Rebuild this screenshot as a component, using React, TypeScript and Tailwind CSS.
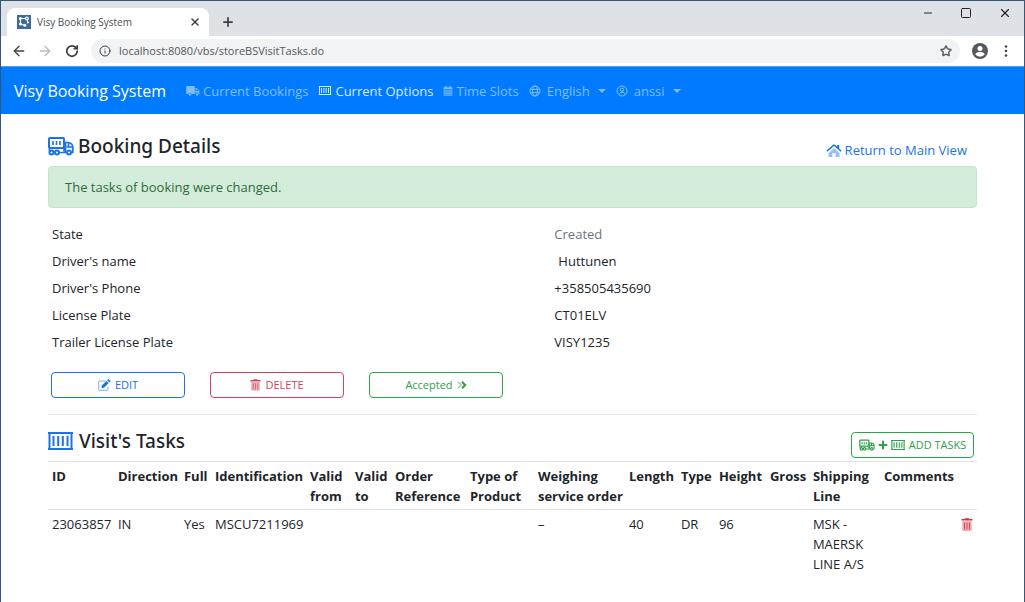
import { useState } from "react";
import { ArrowLeft, ArrowRight, Info, Minus, Plus, RotateCw, Square, Star, X } from "lucide-react";

type IconProps = { className?: string };

function TruckIcon({ className }: IconProps) {
  return (
    <svg viewBox="0 0 26 20" className={className} fill="none" stroke="currentColor" strokeWidth="2" aria-hidden="true">
      <rect x="1" y="2" width="15" height="10" rx="1" />
      <path d="M5 5v4M8.500 5v4M12 5v4" strokeWidth="1.600" />
      <path d="M1.500 12v3.500M16 12v3.500M10 16.500h8M17.500 16.500V6.500H20c2.500 0 4.800 2 4.800 4.500v5.500h-1M18.500 11h6M20.500 7v4" strokeWidth="1.700" />
      <circle cx="3.500" cy="16.500" r="2" />
      <circle cx="9" cy="16.500" r="2" />
      <circle cx="21" cy="16.500" r="2" />
    </svg>
  );
}

function SolidTruckIcon({ className }: IconProps) {
  return (
    <svg viewBox="0 0 14 11" className={className} fill="currentColor" aria-hidden="true">
      <path d="M1 1h7a.8.8 0 0 1 .8.8V9H5.600a1.700 1.700 0 0 0-3.200 0H1a.8.8 0 0 1-.8-.8V1.800A.8.8 0 0 1 1 1Z" />
      <path d="M9.400 3h1.500l2.600 2.700V9h-.7a1.700 1.700 0 0 0-3.200 0h-.2Zm1 1v1.900h2.100L10.700 4Z" opacity=".85" />
      <circle cx="4" cy="9.500" r="1.200" />
      <circle cx="11.200" cy="9.500" r="1.200" />
    </svg>
  );
}

function ContainerIcon({ className }: IconProps) {
  return (
    <svg viewBox="0 0 25 18" className={className} fill="none" stroke="currentColor" strokeWidth="2" aria-hidden="true">
      <path d="M0 1h25M0 17h25M1.500 1v16M23.500 1v16" />
      <path d="M5.500 4v10M10.200 4v10M14.800 4v10M19.500 4v10" />
    </svg>
  );
}

function CalendarIcon({ className }: IconProps) {
  return (
    <svg viewBox="0 0 10 11" className={className} fill="currentColor" aria-hidden="true">
      <path d="M2 0h1.500v1.300h3V0H8v1.300h1.200a.8.8 0 0 1 .8.8v1.400H0V2.100a.8.8 0 0 1 .8-.8H2Z" />
      <path d="M0 4.200h10v6a.8.8 0 0 1-.8.8H.8a.8.8 0 0 1-.8-.8Z" opacity=".6" />
    </svg>
  );
}

function GlobeIcon({ className }: IconProps) {
  return (
    <svg viewBox="0 0 12 12" className={className} fill="none" stroke="currentColor" aria-hidden="true">
      <circle cx="6" cy="6" r="5" />
      <ellipse cx="6" cy="6" rx="2.400" ry="5" />
      <path d="M1.400 4.300h9.200M1.400 7.700h9.200" />
    </svg>
  );
}

function UserIcon({ className }: IconProps) {
  return (
    <svg viewBox="0 0 12 12" className={className} fill="none" stroke="currentColor" aria-hidden="true">
      <circle cx="6" cy="6" r="5" />
      <circle cx="6" cy="4.800" r="1.700" />
      <path d="M3 9.500c.3-1.500 1.200-2 3-2s2.700.5 3 2" />
    </svg>
  );
}

function HomeIcon({ className }: IconProps) {
  return (
    <svg viewBox="0 0 16 13" className={className} fill="currentColor" aria-hidden="true">
      <path d="M8 4.200 13.500 9v3.400a.5.500 0 0 1-.5.500H9.700V9.300H6.300v3.600H3a.5.500 0 0 1-.5-.5V9Z" opacity=".45" />
      <path d="M7.200.7a1.200 1.200 0 0 1 1.600 0l2.400 2V1h2v3.500l2.400 2.100-.9 1.100L8 2 1.300 7.700.4 6.600Z" />
    </svg>
  );
}

function EditIcon({ className }: IconProps) {
  return (
    <svg viewBox="0 0 13 12" className={className} fill="currentColor" aria-hidden="true">
      <path d="M8 2H1.500a.8.8 0 0 0-.8.8v7.700c0 .4.400.8.800.8h7.700c.4 0 .8-.4.800-.8V7.500" fill="none" stroke="currentColor" opacity=".55" />
      <path d="M3.800 6.600 8.500 1.900l2.200 2.200L6 8.800l-2.500.4ZM9.200 1.200l.8-.8c.3-.3.700-.3 1 0l1.300 1.300c.3.300.3.700 0 1l-.8.8Z" />
    </svg>
  );
}

function TrashIcon({ className }: IconProps) {
  return (
    <svg viewBox="0 0 12 13" className={className} fill="currentColor" aria-hidden="true">
      <path d="M.5 1h3.200l.5-.8h3.600l.5.800h3.200v1.600H.5Z" />
      <path d="M1.300 3.200h9.400v8.600c0 .6-.5 1.100-1.100 1.100H2.400c-.6 0-1.100-.5-1.100-1.100Z" opacity=".4" />
      <path d="M3.500 4.500v7M6 4.500v7M8.500 4.500v7" stroke="currentColor" opacity=".75" />
    </svg>
  );
}

function ChevronsIcon({ className }: IconProps) {
  return (
    <svg viewBox="0 0 10 8" className={className} fill="none" stroke="currentColor" aria-hidden="true">
      <path d="m1 .8 3.200 3.200L1 7.200" strokeWidth="1.300" opacity=".5" />
      <path d="m5 .8 3.200 3.200L5 7.200" strokeWidth="2" />
    </svg>
  );
}

function Caret() {
  return <span className="ml-2 border-x-4 border-t-4 border-x-transparent border-t-current" />;
}

function BrowserChrome() {
  const [url, setUrl] = useState("localhost:8080/vbs/storeBSVisitTasks.do");
  return (
    <div>
      <div className="flex h-[35px] bg-[#dee1e6] pt-[7px]">
        <div className="ml-1.5 flex w-[202px] items-center rounded-t-lg bg-white pl-2.5 pr-2">
          <svg viewBox="0 0 14 14" className="h-3.5 w-3.5" aria-hidden="true">
            <rect width="14" height="14" fill="#3d6a9c" />
            <g fill="none" stroke="#fff" strokeWidth="1">
              <path d="M3.300 3.500H10M3.400 3.500V9M10.500 4v4M4 9.500l4 .5" />
            </g>
            <g fill="#fff">
              <circle cx="3.300" cy="3.500" r="1.500" />
              <circle cx="9.800" cy="3.500" r="2" />
              <circle cx="3.500" cy="9" r="1.500" />
              <circle cx="7.800" cy="10.200" r="1.500" />
              <circle cx="11" cy="7.500" r="1" />
            </g>
            <circle cx="9.800" cy="3.500" r=".8" fill="#3d6a9c" />
          </svg>
          <span className="ml-1.5 flex-1 text-[10px] text-[#4a4d51]">Visy Booking System</span>
          <button type="button" aria-label="Close tab" className="text-[#3c4043]"><X className="h-3 w-3" strokeWidth={3} /></button>
        </div>
        <button type="button" aria-label="New tab" className="ml-3 h-7 text-[#3c4043]"><Plus className="h-3.5 w-3.5" strokeWidth={3} /></button>
        <div className="-mt-[7px] ml-auto flex h-6 items-center gap-[26px] pr-3 text-[#222]">
          <button type="button" aria-label="Minimize"><Minus className="h-3 w-3" strokeWidth={2} /></button>
          <button type="button" aria-label="Maximize"><Square className="h-3 w-3" strokeWidth={2} /></button>
          <button type="button" aria-label="Close"><X className="h-3.5 w-3.5" strokeWidth={2} /></button>
        </div>
      </div>
      <div className="flex h-[30px] items-center bg-white pl-2.5 pr-4 text-[#5f6368]">
        <button type="button" aria-label="Back" className="text-[#3c4043]"><ArrowLeft className="h-4 w-4" strokeWidth={2} /></button>
        <button type="button" aria-label="Forward" className="ml-2.5 text-[#b9bbbe]"><ArrowRight className="h-4 w-4" strokeWidth={2} /></button>
        <button type="button" aria-label="Reload" className="ml-3 text-[#3c4043]"><RotateCw className="h-3.5 w-3.5" strokeWidth={3} /></button>
        <div className="ml-3 flex h-6 flex-1 items-center rounded-full bg-[#f1f3f4] pl-2 pr-2">
          <Info className="h-3 w-3 text-[#3c4043]" strokeWidth={2} />
          <input
            aria-label="Address"
            value={url}
            onChange={(e) => setUrl(e.target.value)}
            className="ml-2 min-w-0 flex-1 bg-transparent text-[11px] text-[#55585c] outline-none"
          />
          <button type="button" aria-label="Bookmark"><Star className="h-3 w-3" strokeWidth={3} /></button>
        </div>
        <button type="button" aria-label="Profile" className="ml-3">
          <svg viewBox="0 0 16 16" className="h-4 w-4" aria-hidden="true">
            <circle cx="8" cy="8" r="8" fill="#55585c" />
            <circle cx="8" cy="5.500" r="2.500" fill="#fff" />
            <path d="M3.200 11.300c.6-1.700 3-2.200 4.800-2.200s4.200.5 4.800 2.200A5.900 5.900 0 0 1 8 13.800a5.900 5.900 0 0 1-4.800-2.500Z" fill="#fff" />
          </svg>
        </button>
        <button type="button" aria-label="Menu" className="ml-4">
          <svg viewBox="0 0 4 12" className="h-3 w-1" fill="#44474b" aria-hidden="true">
            <circle cx="2" cy="1.500" r="1.300" />
            <circle cx="2" cy="6" r="1.300" />
            <circle cx="2" cy="10.500" r="1.300" />
          </svg>
        </button>
      </div>
    </div>
  );
}

function Navbar() {
  return (
    <nav className="flex h-12 items-center border-t border-[#4aa0ff] bg-[#007bff] px-[13px] text-[13px] text-[#80bdff]">
      <a href="#home" className="mr-5 text-base text-white">Visy Booking System</a>
      <a href="#bookings" className="mr-2.5 flex items-center gap-[3px]"><SolidTruckIcon className="h-[11px] w-3.5" />Current Bookings</a>
      <a href="#options" className="mr-2.5 flex items-center gap-[3px] text-[#d6eaff]"><ContainerIcon className="h-[9px] w-3.5" />Current Options</a>
      <a href="#slots" className="mr-2.5 flex items-center gap-[3px]"><CalendarIcon className="h-2.5 w-2.5" />Time Slots</a>
      <button type="button" className="mr-2.5 flex items-center"><GlobeIcon className="mr-1.5 h-3 w-3" />English<Caret /></button>
      <button type="button" className="flex items-center"><UserIcon className="mr-1.5 h-3 w-3" />anssi<Caret /></button>
    </nav>
  );
}

const details = [
  { label: "State", value: "Created", valueClass: "text-[#6c757d]" },
  { label: "Driver's name", value: "Huttunen", valueClass: "pl-1" },
  { label: "Driver's Phone", value: "+358505435690", valueClass: "" },
  { label: "License Plate", value: "CT01ELV", valueClass: "" },
  { label: "Trailer License Plate", value: "VISY1235", valueClass: "" },
];

// widths are relative, the table scales them to its own width
const columns = [
  { title: "ID", width: 66, value: "23063857" },
  { title: "Direction", width: 66, value: "IN" },
  { title: "Full", width: 31, value: "Yes" },
  { title: "Identification", width: 95, value: "MSCU7211969" },
  { title: "Valid from", width: 45, value: "" },
  { title: "Valid to", width: 40, value: "" },
  { title: "Order Reference", width: 75, value: "" },
  { title: "Type of Product", width: 68, value: "" },
  { title: "Weighing service order", width: 91, value: "–" },
  { title: "Length", width: 52, value: "40" },
  { title: "Type", width: 38, value: "DR" },
  { title: "Height", width: 51, value: "96" },
  { title: "Gross", width: 43, value: "" },
  { title: "Shipping Line", width: 71, value: "MSK - MAERSK LINE A/S" },
  { title: "Comments", width: 77, value: "" },
];
const actionWidth = 20;
const totalWidth = columns.reduce((sum, c) => sum + c.width, actionWidth);

export default function App() {
  return (
    <div className="min-h-screen border border-b-0 border-[#35577a] bg-white font-['Open_Sans','Noto_Sans',sans-serif] text-[13px] leading-5 text-[#212529]">
      <BrowserChrome />
      <Navbar />
      <main className="px-[47px] pt-4">
        <div className="flex h-9 items-start justify-between">
          <h1 className="flex h-8 items-center gap-1 font-['Noto_Sans',sans-serif] text-[19px] font-medium"><TruckIcon className="h-5 w-[26px] text-[#1a73e8]" />Booking Details</h1>
          <a href="#main" className="mr-2.5 mt-2.5 flex items-center gap-[3px] text-[#1a73e8]"><HomeIcon className="h-[13px] w-4" />Return to Main View</a>
        </div>
        <div role="alert" className="flex h-[42px] items-center rounded border border-[#c3e6cb] bg-[#d4edda] px-4 text-[#2f6b3d]">
          The tasks of booking were changed.
        </div>

        <dl className="mt-3 px-1">
          {details.map((d) => (
            <div key={d.label} className="grid h-[27px] grid-cols-[6fr_5fr] items-center">
              <dt>{d.label}</dt>
              <dd className={d.valueClass}>{d.value}</dd>
            </div>
          ))}
        </dl>

        <div className="mt-[17px] flex gap-[25px] px-[3px] text-[11px]">
          <button type="button" className="flex h-[26px] w-[134px] items-center justify-center gap-1 rounded-sm border border-[#1a73e8] text-[#1a73e8]"><EditIcon className="h-3 w-[13px]" />EDIT</button>
          <button type="button" className="flex h-[26px] w-[134px] items-center justify-center gap-1 rounded-sm border border-[#d14455] text-[#d14455]"><TrashIcon className="h-3 w-[11px]" />DELETE</button>
          <button type="button" className="flex h-[26px] w-[134px] items-center justify-center gap-1 rounded-sm border border-[#28a745] text-[#2f9e48]">Accepted<ChevronsIcon className="h-2 w-2.5" /></button>
        </div>
        <hr className="mt-4 border-[#e5e5e5]" />

        <div className="mt-2.5 flex h-9 items-start justify-between">
          <h2 className="flex h-8 items-center gap-1.5 font-['Noto_Sans',sans-serif] text-[19px] font-medium"><ContainerIcon className="h-[18px] w-[25px] text-[#1a73e8]" />Visit's Tasks</h2>
          <button type="button" className="mr-[3px] mt-[7px] flex h-[26px] w-[123px] items-center justify-center gap-1 rounded-sm border border-[#28a745] text-[11px] text-[#2f9e48]">
            <TruckIcon className="h-3 w-4" />
            <Plus className="-mx-0.5 h-3 w-3" strokeWidth={4} />
            <ContainerIcon className="h-2.5 w-3.5" />
            <span className="whitespace-nowrap">ADD TASKS</span>
          </button>
        </div>

        <table className="w-full table-fixed border-collapse text-left">
          <colgroup>
            {columns.map((c) => <col key={c.title} style={{ width: `${(c.width / totalWidth) * 100}%` }} />)}
            <col style={{ width: `${(actionWidth / totalWidth) * 100}%` }} />
          </colgroup>
          <thead>
            <tr className="border-y border-[#dee2e6] align-top">
              {columns.map((c) => <th key={c.title} className="pb-[3px] pl-1 pt-1 font-bold">{c.title}</th>)}
              <th aria-label="Actions" />
            </tr>
          </thead>
          <tbody>
            <tr className="align-top">
              {columns.map((c) => <td key={c.title} className="py-1 pl-1">{c.value}</td>)}
              <td className="pr-1 pt-1.5 text-right">
                <button type="button" aria-label="Remove task" className="text-[#d32f3f]"><TrashIcon className="h-[13px] w-3" /></button>
              </td>
            </tr>
          </tbody>
        </table>
      </main>
    </div>
  );
}
